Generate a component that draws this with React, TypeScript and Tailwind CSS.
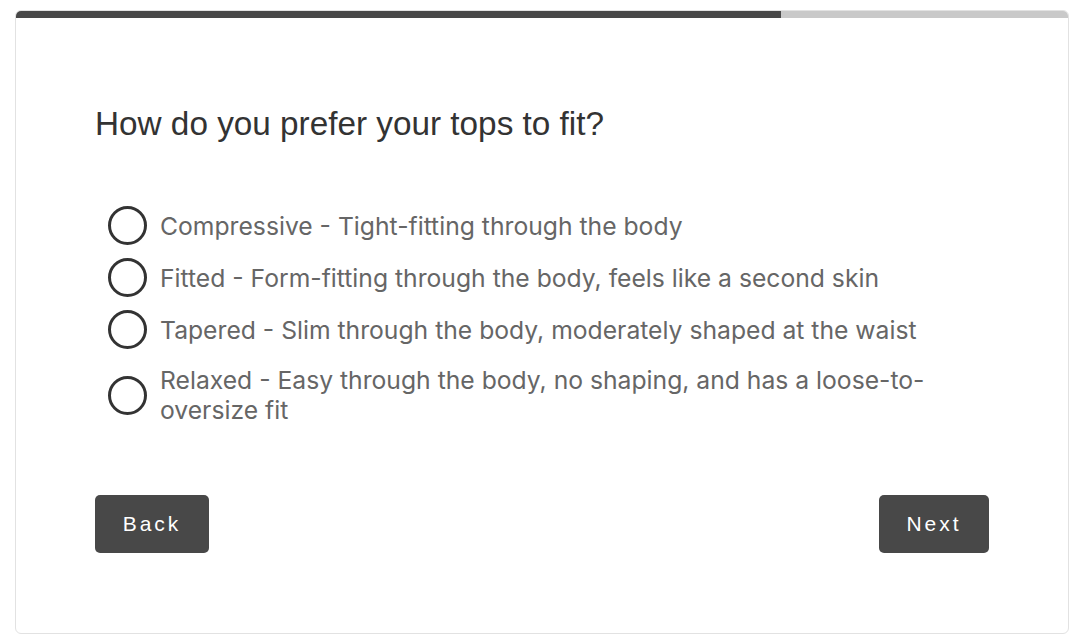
const options = [
	"Compressive - Tight-fitting through the body",
	"Fitted - Form-fitting through the body, feels like a second skin",
	"Tapered - Slim through the body, moderately shaped at the waist",
	"Relaxed - Easy through the body, no shaping, and has a loose-to-oversize fit",
];

export default function App() {
	return (
		<div className="min-h-[634px] bg-white pl-[15px] pr-[11px] pt-[10px] pb-[1px]">
			<div className="rounded-[6px] border border-[#e2e2e2] bg-white overflow-hidden">
				{/* progress */}
				<div className="flex h-[7px]">
					<div className="w-[765px] bg-[#484848]" />
					<div className="flex-1 bg-[#c9c9c9]" />
				</div>
				<div className="px-[79px] pt-[86px] pb-[80px]">
					<h1 className="text-[33.3px] leading-[40px] text-[#333] font-['Liberation_Sans',Arial,sans-serif]">
						How do you prefer your tops to fit?
					</h1>
					<ul className="mt-[62px] flex flex-col gap-[13px] pl-[13px] font-['Inter','Noto_Sans',sans-serif]">
						{options.map((o, i) => (
							<li key={o} className={i === 3 ? "mt-[3px] flex items-center gap-[13px]" : "flex items-center gap-[13px]"}>
								<span className="w-[39px] h-[39px] shrink-0 rounded-full border-[3px] border-[#333]" />
								<span className="text-[24.7px] leading-[30px] text-[#666] max-w-[780px]">{o}</span>
							</li>
						))}
					</ul>
					<div className="mt-[70px] flex justify-between font-['Liberation_Sans',Arial,sans-serif]">
						<button className="w-[114px] h-[58px] rounded-[5px] bg-[#484848] text-white text-[21px] tracking-[3px]">
							Back
						</button>
						<button className="w-[110px] h-[58px] rounded-[5px] bg-[#484848] text-white text-[21px] tracking-[3px]">
							Next
						</button>
					</div>
				</div>
			</div>
		</div>
	);
}
